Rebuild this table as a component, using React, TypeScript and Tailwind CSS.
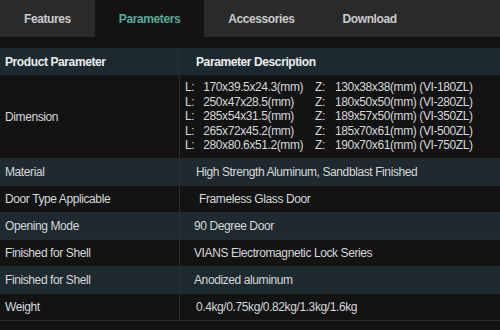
import type { ReactNode } from 'react';

const tabs = ['Features', 'Parameters', 'Accessories', 'Download'];

const dims = [
  ['170x39.5x24.3(mm)', '130x38x38(mm) (VI-180ZL)'],
  ['250x47x28.5(mm)', '180x50x50(mm) (VI-280ZL)'],
  ['285x54x31.5(mm)', '189x57x50(mm) (VI-350ZL)'],
  ['265x72x45.2(mm)', '185x70x61(mm) (VI-500ZL)'],
  ['280x80.6x51.2(mm)', '190x70x61(mm) (VI-750ZL)'],
];

const rows = [
  { label: 'Material', value: 'High Strength Aluminum, Sandblast Finished', pad: 'pl-[16px]' },
  { label: 'Door Type Applicable', value: 'Frameless Glass Door', pad: 'pl-[19px]' },
  { label: 'Opening Mode', value: '90 Degree Door', pad: 'pl-[14px]' },
  { label: 'Finished for Shell', value: 'VIANS Electromagnetic Lock Series', pad: 'pl-[14px]' },
  { label: 'Finished for Shell', value: 'Anodized aluminum', pad: 'pl-[14px]' },
  { label: 'Weight', value: '0.4kg/0.75kg/0.82kg/1.3kg/1.6kg', pad: 'pl-[16px]' },
];

function Row({ label, children, tint, height, pad }: { label: string; children: ReactNode; tint: boolean; height: string; pad: string }) {
  return (
    <div className={`flex ${height} border-b border-[#262a2d] ${tint ? 'bg-[#1e2a30]' : 'bg-[#131313]'}`}>
      <div className="w-[180px] shrink-0 flex items-center pl-[5px] border-r border-[#2a2f32]">{label}</div>
      <div className={`flex-1 flex items-center ${pad}`}>{children}</div>
    </div>
  );
}

export default function App() {
  return (
    <div
      className="w-[500px] h-[330px] overflow-hidden bg-[#131313] text-[#d6d8d9] text-[12px] tracking-[-0.4px]"
      style={{ fontFamily: '"Liberation Sans", Arial, sans-serif' }}
    >
      {/* tab bar */}
      <div className="flex h-[37px] bg-[#2a2a2a] font-bold text-[#cacaca]">
        {tabs.map((t) => (
          <div
            key={t}
            className={`px-6 flex items-center ${t === 'Parameters' ? 'bg-[#131313] text-[#5aa99c]' : ''}`}
          >
            {t}
          </div>
        ))}
      </div>

      <div className="mt-[11px]">
        {/* header */}
        <div className="flex h-[27px] bg-[#1c2a30] font-bold text-[#eeeeee]">
          <div className="w-[178px] shrink-0 flex items-center pl-[5px] border-r border-[#253338]">Product Parameter</div>
          <div className="flex-1 flex items-center pl-[18px]">Parameter Description</div>
        </div>

        <Row label="Dimension" tint={false} height="h-[84px]" pad="pl-[5px]">
          <div className="flex flex-col leading-[14.6px]">
            {dims.map(([l, z]) => (
              <div key={l} className="flex">
                <span className="w-[130px]">
                  L:<span className="ml-[9px]">{l}</span>
                </span>
                <span>
                  Z:<span className="ml-[10px]">{z}</span>
                </span>
              </div>
            ))}
          </div>
        </Row>

        {rows.map((r, i) => (
          <Row key={i} label={r.label} tint={i % 2 === 0} height="h-[27px]" pad={r.pad}>
            {r.value}
          </Row>
        ))}
      </div>
    </div>
  );
}
